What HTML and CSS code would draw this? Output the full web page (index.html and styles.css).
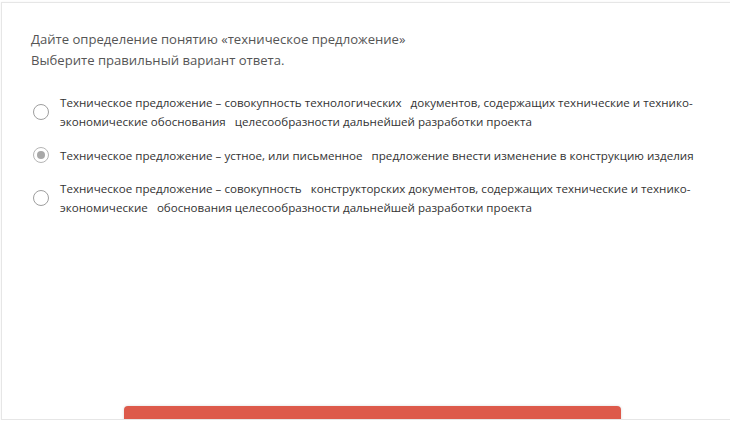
FILE: index.html
```html
<!DOCTYPE html>
<html lang="ru">
<head>
<meta charset="utf-8">
<link rel="stylesheet" href="styles.css">
</head>
<body>
<div class="card">
  <div class="question">
    <p class="q-title">Дайте определение понятию «техническое предложение»</p>
    <p class="q-hint">Выберите правильный вариант ответа.</p>
  </div>
  <ul class="options">
    <li class="option">
      <span class="radio"></span>
      <span class="label">Техническое предложение – совокупность технологических &nbsp; документов, содержащих технические и технико-экономические обоснования &nbsp; целесообразности дальнейшей разработки проекта</span>
    </li>
    <li class="option">
      <span class="radio checked"></span>
      <span class="label">Техническое предложение – устное, или письменное &nbsp; предложение внести изменение в конструкцию изделия</span>
    </li>
    <li class="option">
      <span class="radio"></span>
      <span class="label">Техническое предложение – совокупность &nbsp; конструкторских документов, содержащих технические и технико-экономические &nbsp; обоснования целесообразности дальнейшей разработки проекта</span>
    </li>
  </ul>
  <div class="footer">
    <button class="submit">Ответить</button>
  </div>
</div>
</body>
</html>
```
FILE: styles.css
```css
html, body {
  margin: 0;
  padding: 0;
  background: #fff;
  overflow: hidden;
}
body {
  font-family: "Open Sans", "Noto Sans", sans-serif;
}
.card {
  margin: 2px 0 0 1px;
  width: 760px;
  height: 418px;
  border: 1px solid #e6e6e6;
  border-right: none;
  box-shadow: 0 0 2px rgba(0,0,0,0.06);
  overflow: hidden;
  box-sizing: border-box;
  padding: 26px 0 0 29px;
  display: flex;
  flex-direction: column;
}
.question p {
  margin: 0;
  font-size: 13.1px;
  line-height: 21px;
  color: #555;
}
.options {
  list-style: none;
  margin: 22px 0 0 0;
  padding: 0;
  width: 700px;
}
.option {
  display: flex;
  align-items: center;
  gap: 11px;
  margin-bottom: 14.5px;
}
.radio {
  flex: none;
  width: 14px;
  height: 14px;
  border: 1.5px solid #9e9e9e;
  border-radius: 50%;
  margin-left: 2px;
  position: relative;
  box-sizing: content-box;
}
.radio.checked {
  border-color: #b5b5b5;
}
.radio.checked::after {
  content: "";
  position: absolute;
  left: 3px;
  top: 3px;
  width: 8px;
  height: 8px;
  border-radius: 50%;
  background: #a8a8a8;
}
.label {
  width: 648px;
  font-size: 11.6px;
  line-height: 19px;
  color: #333;
}
.footer {
  margin-top: auto;
  padding: 0 0 0 93px;
}
.submit {
  display: block;
  width: 497px;
  height: 40px;
  margin-bottom: -27px;
  border: none;
  border-radius: 4px;
  background: #dd5a4b;
  color: #fff;
  font-family: inherit;
  font-size: 13px;
  text-align: left;
  padding: 12px 10px;
  box-shadow: 0 0 3px rgba(0,0,0,0.15);
}
```
